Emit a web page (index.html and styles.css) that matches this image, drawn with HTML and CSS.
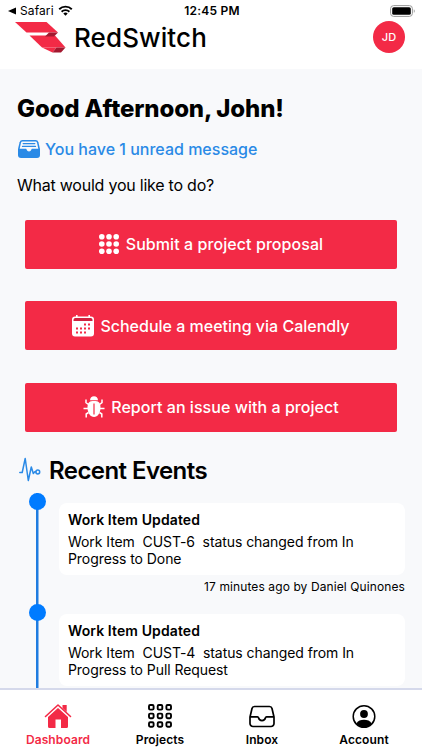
FILE: index.html
```html
<!DOCTYPE html>
<html lang="en">
<head>
  <meta charset="UTF-8">
  <title>RedSwitch</title>
  <meta name="viewport" content="width=device-width, initial-scale=1.0">
  <link rel="stylesheet" href="styles.css">
</head>
<body>
<div class="app">
  <div class="status-bar">
    <div class="status-left">
      <svg width="8" height="8" viewBox="0 0 8 8"><path d="M8 0.5v7L0 4z"/></svg>
      <span class="status-app">Safari</span>
      <svg class="wifi" width="15" height="11" viewBox="0 0 15 11">
        <path d="M1.2 4.2a9 9 0 0 1 12.6 0M3.6 6.7a5.6 5.6 0 0 1 7.8 0" fill="none" stroke="#000" stroke-width="1.9"/>
        <path d="M5.3 8.5a3.2 3.2 0 0 1 4.4 0L7.5 10.8z"/>
      </svg>
    </div>
    <div class="status-time">12:45 PM</div>
    <div class="status-right">
      <svg width="26" height="12" viewBox="0 0 26 12">
        <rect x="0.6" y="0.6" width="21.8" height="10.8" rx="3" fill="#fff" stroke="#999" stroke-width="1"/>
        <rect x="2.2" y="2.2" width="18.6" height="7.6" rx="1.6"/>
        <path d="M23.8 4.2c1.3.4 1.3 3.2 0 3.6z" fill="#999"/>
      </svg>
    </div>
  </div>

  <header class="header">
    <div class="brand">
      <svg width="51" height="31" viewBox="0 0 51 31">
        <path d="M0 0h31.500L43 10.500H11.500z" fill="#f32a46"/>
        <path d="M14.500 13.500H40L50.500 25.500H27z" fill="#f32a46"/>
        <path d="M27 25.500h14.500L37.500 30.500z" fill="#f32a46"/>
        <path d="M34 10.500h9L39 14.500H30z" fill="#a3182f"/>
        <path d="M41.500 25.500h9L46 30.500H37.500z" fill="#a3182f"/>
      </svg>
      <span class="brand-name">RedSwitch</span>
    </div>
    <div class="avatar">JD</div>
  </header>

  <main class="content">
    <h1 class="greeting">Good Afternoon, John!</h1>
    <div class="unread">
      <svg width="22" height="18" viewBox="0 0 22 18">
        <path d="M4.500 0h13A3 3 0 0 1 20.400 2.300L22 9v6a3 3 0 0 1-3 3H3a3 3 0 0 1-3-3V9L1.600 2.300A3 3 0 0 1 4.500 0z" fill="#2a8ae6"/>
        <path d="M4.500 1.500h13a1.600 1.600 0 0 1 1.500 1.200L20.300 8.800H14.300c-.6 0-.9.500-1 1a2.400 2.400 0 0 1-4.600 0c-.1-.5-.4-1-1-1H1.700L3 2.700A1.600 1.600 0 0 1 4.500 1.500z" fill="#f8f9fb"/>
        <path d="M5.200 3.600h11.600M4.500 6.400h13" stroke="#2a8ae6" stroke-width="1.300" stroke-linecap="round"/>
      </svg>
      <span>You have 1 unread message</span>
    </div>
    <p class="question">What would you like to do?</p>

    <div class="actions">
      <button class="action">
        <svg width="20" height="20" viewBox="0 0 20 20" fill="#fff">
          <circle cx="2.800" cy="2.800" r="2.800"/><circle cx="10" cy="2.800" r="2.800"/><circle cx="17.200" cy="2.800" r="2.800"/>
          <circle cx="2.800" cy="10" r="2.800"/><circle cx="10" cy="10" r="2.800"/><circle cx="17.200" cy="10" r="2.800"/>
          <circle cx="2.800" cy="17.200" r="2.800"/><circle cx="10" cy="17.200" r="2.800"/><circle cx="17.200" cy="17.200" r="2.800"/>
        </svg>
        <span class="label-submit">Submit a project proposal</span>
      </button>
      <button class="action action-calendar">
        <svg width="22" height="22" viewBox="0 0 22 22">
          <path d="M3 1.500h1V0h1.600v1.500h10.800V0H18v1.500h1a3 3 0 0 1 3 3V18.500a3 3 0 0 1-3 3H3a3 3 0 0 1-3-3v-14a3 3 0 0 1 3-3z" fill="#fff"/>
          <path d="M1.500 6V4.700A1.800 1.800 0 0 1 3.300 3h15.400a1.800 1.800 0 0 1 1.800 1.700V6z" fill="#d0213f"/>
          <path d="M12 8.500h2v2h-2zM16 8.500h2v2h-2zM4 12.500h2v2H4zM8 12.500h2v2H8zM12 12.500h2v2h-2zM16 12.500h2v2h-2zM4 16.500h2v2H4zM8 16.500h2v2H8zM12 16.500h2v2h-2z" fill="#f32a46"/>
        </svg>
        <span class="label-schedule">Schedule a meeting via Calendly</span>
      </button>
      <button class="action action-bug">
        <svg width="22" height="22" viewBox="0 0 22 22">
          <path d="M7 4.300C7.200 1.500 8.700.2 11 .2s3.800 1.300 4 4.100z" fill="#fff"/>
          <path d="M11 5c-4.200 0-6.500 1-6.500 6.500S7.300 21 11 21s6.500-4 6.500-9.500S15.200 5 11 5z" fill="#fff"/>
          <path d="M5.500 8.500L3 6.700V3.500M5 12.500H.5M5.500 16.500L3.200 18v3.500M16.500 8.500L19 6.700V3.500M17 12.500h4.500M16.500 16.500l2.300 1.500v3.500" fill="none" stroke="#fff" stroke-width="1.500"/>
          <path d="M11 7.500v11" stroke="#f32a46" stroke-width="1.200"/>
        </svg>
        <span class="label-report">Report an issue with a project</span>
      </button>
    </div>

    <div class="section-title">
      <svg width="22" height="25" viewBox="0 0 22 25" fill="none" stroke="#2a8ae6" stroke-width="1.500" stroke-linejoin="round" stroke-linecap="round">
        <path d="M.8 15.500H3.200L6.200 1.500 9.300 23.500 12.300 10l2 6.500 1.500-1.700h1"/>
        <circle cx="18.800" cy="15" r="1.900"/>
      </svg>
      <h2>Recent Events</h2>
    </div>

    <div class="timeline">
      <div class="event">
        <div class="rail"><span class="dot"></span></div>
        <div class="event-body">
          <div class="card">
            <div class="card-title">Work Item Updated</div>
            <div class="card-text">Work Item&nbsp; CUST-6&nbsp; status changed from In Progress to Done</div>
          </div>
          <div class="meta">17 minutes ago by Daniel Quinones</div>
        </div>
      </div>
      <div class="event">
        <div class="rail"><span class="dot"></span></div>
        <div class="event-body">
          <div class="card">
            <div class="card-title">Work Item Updated</div>
            <div class="card-text">Work Item&nbsp; CUST-4&nbsp; status changed from In Progress to Pull Request</div>
          </div>
        </div>
      </div>
    </div>
  </main>

  <nav class="tabs">
    <a class="tab active">
      <svg width="28" height="26" viewBox="0 0 28 26">
        <path d="M1.500 13.500L14 2l12.500 11.500" fill="none" stroke="#f32a46" stroke-width="1.600" stroke-linecap="round" stroke-linejoin="round"/>
        <path d="M14 4.900L24 14v9.500a1.500 1.500 0 0 1-1.500 1.500H17v-8.500h-5.500V25h-6A1.500 1.500 0 0 1 4 23.500V14z" fill="#f32a46"/>
        <path d="M18.500 2h4.200v7l-4.200-4z" fill="#f32a46"/>
      </svg>
      <span>Dashboard</span>
    </a>
    <a class="tab">
      <svg width="24" height="26" viewBox="0 0 24 26" fill="none" stroke="#000" stroke-width="1.900">
        <rect x="1" y="2" width="4.600" height="4.600" rx="1.200"/><rect x="9.700" y="2" width="4.600" height="4.600" rx="1.200"/><rect x="18.400" y="2" width="4.600" height="4.600" rx="1.200"/>
        <rect x="1" y="10.600" width="4.600" height="4.600" rx="1.200"/><rect x="9.700" y="10.600" width="4.600" height="4.600" rx="1.200"/><rect x="18.400" y="10.600" width="4.600" height="4.600" rx="1.200"/>
        <rect x="1" y="19.200" width="4.600" height="4.600" rx="1.200"/><rect x="9.700" y="19.200" width="4.600" height="4.600" rx="1.200"/><rect x="18.400" y="19.200" width="4.600" height="4.600" rx="1.200"/>
      </svg>
      <span>Projects</span>
    </a>
    <a class="tab">
      <svg width="26" height="26" viewBox="0 0 26 26" fill="none" stroke="#000" stroke-width="1.700" stroke-linejoin="round">
        <path d="M5.500 3.500h15a2.600 2.600 0 0 1 2.500 2l2 8.500v6.500a3 3 0 0 1-3 3H4a3 3 0 0 1-3-3V14L3 5.500a2.600 2.600 0 0 1 2.500-2z"/>
        <path d="M1 13.800h7.500c.6 0 .9.500 1 1a3.600 3.600 0 0 0 7 0c.1-.5.400-1 1-1H25"/>
      </svg>
      <span>Inbox</span>
    </a>
    <a class="tab">
      <svg width="24" height="26" viewBox="0 0 24 26">
        <circle cx="12" cy="13.500" r="10.800" fill="none" stroke="#000" stroke-width="1.500"/>
        <circle cx="12" cy="11" r="3.900"/>
        <path d="M4.300 20.500C5.800 17.800 8.800 16.800 12 16.800s6.200 1 7.700 3.700C17.800 23 15 24.200 12 24.200S6.200 23 4.300 20.500z"/>
      </svg>
      <span>Account</span>
    </a>
  </nav>
</div>
</body>
</html>
```
FILE: styles.css
```css
* {
  box-sizing: border-box;
}
body, html {
  margin: 0;
  padding: 0;
  height: 100%;
  font-family: 'Inter', 'Liberation Sans', sans-serif;
  color: #000;
  background: #f8f9fb;
}
svg {
  display: block;
  flex-shrink: 0;
}
.app {
  display: flex;
  flex-direction: column;
  width: 422px;
  height: 750px;
  overflow: hidden;
}

/* status bar */
.status-bar {
  display: grid;
  grid-template-columns: 1fr auto 1fr;
  align-items: center;
  height: 21px;
  padding: 0 6px 0 8px;
  background: #fff;
  font-size: 12px;
}
.status-left {
  display: flex;
  align-items: center;
  gap: 4px;
}
.status-app {
  letter-spacing: 0.1px;
}
.status-time {
  font-weight: 600;
  letter-spacing: 0.2px;
}
.status-right {
  display: flex;
  justify-content: flex-end;
}

/* header */
.header {
  display: flex;
  justify-content: space-between;
  align-items: flex-start;
  height: 48px;
  padding: 0 17px 0 15px;
  background: #fff;
}
.brand {
  display: flex;
  gap: 8px;
  padding-top: 1px;
}
.brand-name {
  font-size: 26px;
  line-height: 31px;
  font-weight: 500;
  letter-spacing: 0.1px;
}
.avatar {
  width: 32px;
  height: 32px;
  border-radius: 50%;
  background: #f32a46;
  color: #fff;
  font-size: 11px;
  font-weight: 500;
  line-height: 33px;
  text-align: center;
}

/* content */
.content {
  flex: 1;
  min-height: 0;
  overflow: hidden;
  padding: 25px 17px 0;
}
.greeting {
  margin: 0;
  font-size: 24px;
  line-height: 30px;
  font-weight: 800;
  letter-spacing: -0.15px;
  white-space: nowrap;
}
.unread {
  display: flex;
  align-items: center;
  gap: 5px;
  height: 20px;
  margin-top: 15px;
  padding-left: 1px;
  color: #2a8ae6;
  font-size: 16px;
  font-weight: 500;
}
.question {
  margin: 16px 0 0;
  font-size: 16px;
  line-height: 20px;
  letter-spacing: -0.23px;
}
.actions {
  display: flex;
  flex-direction: column;
  gap: 32.5px;
  padding: 24.5px 8px 0;
}
.action {
  display: flex;
  align-items: center;
  justify-content: center;
  gap: 7px;
  height: 49px;
  padding: 0;
  border: none;
  border-radius: 2px;
  background: #f32a46;
  color: #fff;
  font-family: inherit;
  font-size: 16px;
  font-weight: 500;
}
.label-submit {
  letter-spacing: 0.07px;
}
.action-calendar, .action-bug {
  gap: 6px;
}
.label-report {
  letter-spacing: 0.04px;
}
.section-title {
  display: flex;
  align-items: center;
  gap: 8px;
  height: 30px;
  margin-top: 23px;
  padding-left: 2px;
}
.section-title h2 {
  margin: 2px 0 0;
  font-size: 24px;
  font-weight: 600;
  letter-spacing: -0.57px;
}

/* timeline */
.timeline {
  padding: 8px 0 0 12px;
}
.event {
  display: flex;
  gap: 13px;
  height: 111.3px;
}
.rail {
  width: 17px;
  background: linear-gradient(#1f7ce0, #1f7ce0) center / 2.5px 100% no-repeat;
}
.dot {
  display: block;
  width: 17px;
  height: 17px;
  border-radius: 50%;
  background: #007bff;
}
.event-body {
  width: 346px;
  padding-top: 10px;
}
.card {
  height: 72px;
  padding: 7px 9px;
  border-radius: 8px;
  background: #fff;
}
.card-title {
  font-size: 14px;
  line-height: 19px;
  font-weight: 600;
  letter-spacing: 0.1px;
}
.card-text {
  margin-top: 4px;
  font-size: 14px;
  line-height: 17.5px;
  letter-spacing: -0.07px;
}
.meta {
  margin-top: 4px;
  font-size: 12px;
  line-height: 16px;
  letter-spacing: 0.1px;
  text-align: right;
}

/* bottom tabs */
.tabs {
  display: flex;
  height: 62px;
  padding: 0 7px;
  border-top: 2px solid #d5d9eb;
  background: #fff;
}
.tab {
  flex: 1;
  display: flex;
  flex-direction: column;
  align-items: center;
  padding-top: 13px;
  gap: 3px;
  font-size: 12px;
  line-height: 16px;
  font-weight: 600;
  letter-spacing: 0.1px;
}
.tab.active {
  color: #f32a46;
}
```
